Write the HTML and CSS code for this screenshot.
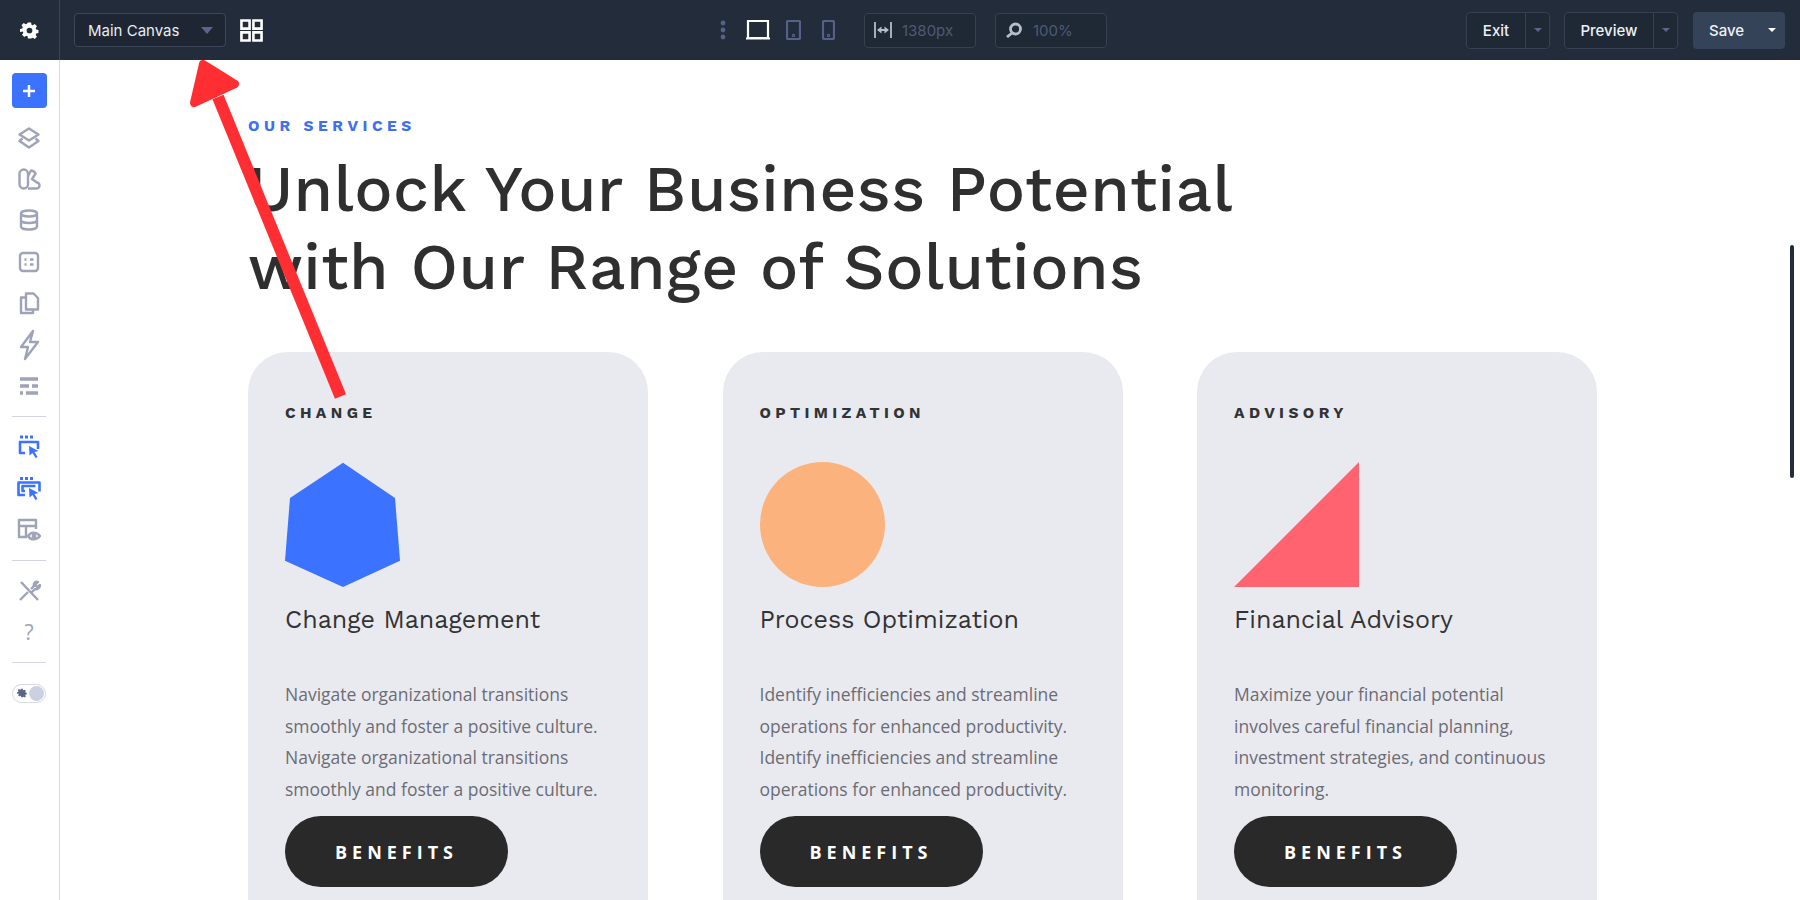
FILE: index.html
```html
<!DOCTYPE html>
<html lang="en">
<head>
<meta charset="utf-8">
<title>Our Services</title>
<link rel="stylesheet" href="styles.css">
</head>
<body>
<div class="app">
  <header class="topbar">
    <div class="brand">
      <svg class="gear" viewBox="0 0 24 24"><path d="M10 2h4l.5 2.800 1.700.7 2.400-1.600 2.800 2.800-1.600 2.400.7 1.700 2.800.5v4l-2.800.5-.7 1.700 1.600 2.400-2.800 2.800-2.400-1.600-1.700.7L14 22h-4l-.5-2.800-1.700-.7-2.400 1.600-2.800-2.800 1.600-2.400-.7-1.700L0 14v-4l2.800-.5.7-1.700-1.600-2.400 2.800-2.800 2.400 1.600 1.700-.7z"/><circle class="gear-hole" cx="12" cy="12" r="3.600"/></svg>
    </div>
    <div class="left-tools">
      <div class="select"><span>Main Canvas</span><i class="caret"></i></div>
      <svg class="grid-icon" viewBox="0 0 24 24"><path d="M1.500 1.500h8.500v8.500H1.500zM14 1.500h8.500v8.500H14zM1.500 14h8.500v8.500H1.500zM14 14h8.500v8.500H14z"/></svg>
    </div>
    <div class="center-tools">
      <svg class="dots" viewBox="0 0 6 20"><circle cx="3" cy="3" r="2.400"/><circle cx="3" cy="10" r="2.400"/><circle cx="3" cy="17" r="2.400"/></svg>
      <svg class="device desktop" viewBox="0 0 24 20"><path d="M2 1h20v17H2zM0 18.500h24"/></svg>
      <svg class="device tablet" viewBox="0 0 15 20"><rect x="1" y="1" width="13" height="18" rx="1"/><circle cx="7.500" cy="15.500" r=".6"/></svg>
      <svg class="device phone" viewBox="0 0 13 20"><rect x="1" y="1" width="11" height="18" rx="1.500"/><circle cx="6.500" cy="15.500" r=".6"/></svg>
      <div class="field first">
        <svg class="field-icon" viewBox="0 0 18 16"><path d="M1 0v16M17 0v16M4 8h10"/><path class="solid" d="M3 8l4.500-3.500v7zM15 8l-4.500-3.500v7z"/></svg>
        <span>1380px</span>
      </div>
      <div class="field">
        <svg class="field-icon zoom" viewBox="0 0 18 16"><circle cx="10.500" cy="7" r="5"/><path d="M7 11l-5 4"/></svg>
        <span>100%</span>
      </div>
    </div>
    <div class="right-tools">
      <div class="split exit"><span class="label">Exit</span><span class="arrow-part"><i class="caret small"></i></span></div>
      <div class="split preview"><span class="label">Preview</span><span class="arrow-part"><i class="caret small"></i></span></div>
      <div class="save"><span>Save</span><i class="caret small white"></i></div>
    </div>
  </header>
  <div class="body-row">
    <aside class="sidebar">
      <div class="add"><svg viewBox="0 0 14 14"><path d="M7 1v12M1 7h12"/></svg></div>
      <div class="item"><svg viewBox="0 0 24 24"><path d="M12 2.500l9.500 6-9.500 6-9.500-6z"/><path d="M5.500 12.500l-3 2.500 9.500 6.500 9.500-6.500-3-2.500"/></svg></div>
      <div class="item"><svg viewBox="0 0 24 24"><rect x="2.500" y="2.500" width="8.500" height="19" rx="4.200"/><path d="M11 9l3-5.500c2.500.5 4 1.700 4.500 3L14.500 13M11 21.500h8a3 3 0 0 0 1-6l-5-3.500"/></svg></div>
      <div class="item"><svg viewBox="0 0 24 24"><ellipse cx="12" cy="5.500" rx="8" ry="3"/><path d="M4 5.500v13c0 1.700 3.600 3 8 3s8-1.300 8-3v-13M4 12c0 1.700 3.600 3 8 3s8-1.300 8-3"/></svg></div>
      <div class="item"><svg viewBox="0 0 24 24"><rect x="3" y="3" width="18" height="18" rx="3"/><path d="M7.500 9.500h2M7.500 14.500h2M13 9.500h3.500M13 14.500h3.500"/></svg></div>
      <div class="item"><svg viewBox="0 0 24 24"><path d="M9 2.500h7.500l4.500 4.500v11.500H9z"/><path d="M9 6.500H4v15.500h12v-3.500"/></svg></div>
      <div class="item"><svg class="bolt" viewBox="0 0 24 32"><path d="M16 2L4 18h7l-3 12L21 13h-8z"/></svg></div>
      <div class="item"><svg class="lines" viewBox="0 0 24 24"><path d="M3 5h18M3 12h9M15 12h6M3 19h3M9 19h12"/></svg></div>
      <div class="rule first-rule"></div>
      <div class="item blue"><svg viewBox="0 0 24 24"><path d="M3 2h3M8 2h3M13 2h3" class="thick"/><path d="M8 18H3V7h18v7"/><path class="solid" d="M12 11l9.500 5-4 1 3 5-2 1-3-5-3 2.500z"/></svg></div>
      <div class="item blue"><svg viewBox="0 0 24 24"><path d="M3 1.500h3M8 1.500h3M13 1.500h3" class="thick"/><path d="M8 18H1.500V5.500h21v9"/><path d="M8 14H5.500V9h13"/><path class="solid" d="M12 11l9.500 5-4 1 3 5-2 1-3-5-3 2.500z"/></svg></div>
      <div class="item"><svg viewBox="0 0 24 24"><path d="M10 19H2V2h17v9M2 8h17M9 8v11"/><path d="M11 18c3-4.500 8-4.500 12 0-4 4.500-9 4.500-12 0z"/><circle cx="17" cy="18" r="1.200"/></svg></div>
      <div class="rule"></div>
      <div class="item"><svg viewBox="0 0 24 24"><path d="M4 3l17 18M3 21l8-8M14 10l3-3c-1-3 2-5 4-4l-3 3 2 2 3-2c0 3-3 5-5 4l-3 3"/></svg></div>
      <div class="item question">?</div>
      <div class="rule"></div>
      <div class="toggle"><svg viewBox="0 0 24 24"><path d="M10 2h4l.5 2.800 1.700.7 2.400-1.600 2.800 2.800-1.600 2.400.7 1.700 2.800.5v4l-2.800.5-.7 1.700 1.600 2.400-2.800 2.800-2.400-1.600-1.700.7L14 22h-4l-.5-2.800-1.700-.7-2.400 1.600-2.800-2.800 1.600-2.400-.7-1.700L0 14v-4l2.800-.5.7-1.700-1.600-2.400 2.800-2.800 2.400 1.600 1.700-.7z"/></svg><i class="knob"></i></div>
    </aside>
    <main class="canvas">
      <p class="eyebrow">OUR SERVICES</p>
      <h1>Unlock Your Business Potential<br>with Our Range of Solutions</h1>
      <section class="cards">
        <article class="card">
          <h3 class="tag">CHANGE</h3>
          <svg class="shape" viewBox="0 0 115 125"><polygon class="hex" points="58,0.700 110,36 115,98.700 58,125 0,98.700 5,36"/></svg>
          <h2>Change Management</h2>
          <p class="copy">Navigate organizational transitions smoothly and foster a positive culture. Navigate organizational transitions smoothly and foster a positive culture.</p>
          <a class="btn">BENEFITS</a>
        </article>
        <article class="card">
          <h3 class="tag">OPTIMIZATION</h3>
          <svg class="shape" viewBox="0 0 125 125"><circle class="circ" cx="62.500" cy="62.500" r="62.500"/></svg>
          <h2>Process Optimization</h2>
          <p class="copy">Identify inefficiencies and streamline operations for enhanced productivity. Identify inefficiencies and streamline operations for enhanced productivity.</p>
          <a class="btn">BENEFITS</a>
        </article>
        <article class="card">
          <h3 class="tag">ADVISORY</h3>
          <svg class="shape" viewBox="0 0 125 125"><polygon class="tri" points="125,0 125,125 0,125"/></svg>
          <h2>Financial Advisory</h2>
          <p class="copy">Maximize your financial potential involves careful financial planning, investment strategies, and continuous monitoring.</p>
          <a class="btn">BENEFITS</a>
        </article>
      </section>
    </main>
  </div>
  <i class="scrollbar"></i>
  <svg class="annotation" viewBox="0 0 400 420"><path class="shaft" d="M218 97L340.500 396.500"/><path class="head" d="M203 64L235 84L194 103z"/></svg>
</div>
</body>
</html>
```
FILE: styles.css
```css
* { box-sizing: border-box; }
html, body { margin: 0; height: 100%; }
body { background: #fff; font-family: Inter, "Liberation Sans", sans-serif; color: #2d2d2d; overflow: hidden; }
.app { position: relative; width: 100%; height: 900px; overflow: hidden; display: flex; flex-direction: column; }

.topbar { height: 60px; flex: none; background: #222c3a; display: flex; align-items: center; color: #e8ecf2; font-size: 15px; }
.brand { width: 60px; height: 60px; flex: none; display: flex; align-items: center; justify-content: center; border-right: 1px solid #3a4455; }
.gear { width: 19px; height: 19px; fill: #fff; }
.gear-hole { fill: #222c3a; }
.left-tools { display: flex; align-items: center; margin-left: 14px; gap: 14px; width: 190px; flex: none; }
.select { width: 152px; height: 34px; flex: none; border: 1px solid #3b4759; border-radius: 4px; background: #1e2633; display: flex; align-items: center; justify-content: space-between; padding: 0 12px 0 13px; }
.select span { font-size: 15px; }
.caret { display: block; width: 0; height: 0; border-left: 6px solid transparent; border-right: 6px solid transparent; border-top: 7px solid #5a6589; }
.caret.small { border-left-width: 4px; border-right-width: 4px; border-top-width: 4px; }
.caret.white { border-top-color: #fff; }
.grid-icon { width: 23px; height: 23px; fill: none; stroke: #fff; stroke-width: 2.700; flex: none; }

.center-tools { display: flex; align-items: center; margin-left: 456px; flex: none; }
.dots { width: 6px; height: 20px; fill: #56618a; margin-right: 20px; }
.device { height: 20px; fill: none; stroke: #56618a; stroke-width: 2.200; flex: none; }
.device.desktop { width: 24px; stroke: #fff; margin-right: 16px; }
.device.tablet { width: 15px; margin-right: 21px; }
.device.phone { width: 13px; margin-right: 29px; }
.field { width: 112px; height: 35px; border: 1px solid #354052; border-radius: 4px; background: #1f2835; display: flex; align-items: center; gap: 10px; padding-left: 9px; color: #4e5a75; font-size: 15px; margin-left: 19px; }
.field.first { margin-left: 0; }
.field-icon { width: 18px; height: 16px; fill: none; stroke: #b4bccd; stroke-width: 1.800; flex: none; }
.field-icon.zoom { stroke-width: 2.800; }
.solid { fill: #b4bccd; stroke: none; }

.right-tools { margin-left: auto; margin-right: 15px; display: flex; align-items: center; gap: 14px; }
.split { height: 37px; border: 1px solid #354052; border-radius: 4px; background: #1f2835; display: flex; font-weight: 500; font-size: 15px; color: #eef1f5; }
.split.exit { width: 84px; }
.split.preview { width: 114px; }
.label { flex: 1; display: flex; align-items: center; justify-content: center; }
.arrow-part { width: 24px; border-left: 1px solid #354052; display: flex; align-items: center; justify-content: center; }
.save { width: 92px; height: 37px; margin-left: 1px; background: #344358; border-radius: 4px; display: flex; align-items: center; justify-content: space-between; padding: 0 9px 0 16px; font-weight: 500; font-size: 15px; color: #eef1f5; }

.body-row { flex: 1; display: flex; min-height: 0; }
.sidebar { width: 60px; flex: none; border-right: 1px solid #d8dbe6; background: #fff; display: flex; flex-direction: column; align-items: center; padding: 13px 1px 0 0; }
.add { width: 35px; height: 35px; background: #3b72ff; border-radius: 4px; display: flex; align-items: center; justify-content: center; margin-bottom: 9px; flex: none; }
.add svg { width: 14px; height: 14px; fill: none; stroke: #fff; stroke-width: 2.500; }
.item { height: 41.400px; width: 100%; display: flex; align-items: center; justify-content: center; flex: none; }
.item svg { width: 24px; height: 24px; fill: none; stroke: #9ea3b8; stroke-width: 2.400; stroke-linejoin: round; }
.item .bolt { width: 24px; height: 32px; }
.item .lines { stroke-width: 3.600; }
.item.blue svg { stroke: #3b72ff; stroke-width: 2.600; }
.item.blue .solid { fill: #3b72ff; stroke: none; }
.item.blue .thick { stroke-width: 3.200; }
.question { font-size: 21px; font-weight: 500; color: #9ea3b8; font-family: "Open Sans", sans-serif; }
.rule { width: 34px; height: 1px; background: #d4d6df; margin: 9px 0 9px; flex: none; }
.rule.first-rule { margin-bottom: 10px; }
.toggle { width: 34px; height: 19px; border: 1px solid #d7d9e3; border-radius: 10px; display: flex; align-items: center; justify-content: space-between; padding: 0 1px 0 4px; margin-top: 12px; flex: none; }
.toggle svg { width: 10px; height: 10px; fill: #5a6589; }
.knob { width: 15px; height: 15px; border-radius: 50%; background: #ccd1e2; }

.canvas { flex: 1; padding: 57px 0 0 188px; min-width: 0; }
.eyebrow { margin: 0; font-family: "Work Sans", Inter, sans-serif; font-weight: 700; font-size: 15.500px; line-height: 18px; letter-spacing: 4.500px; color: #3f6ff0; }
h1 { margin: 15px 0 0; font-family: "Work Sans", Inter, sans-serif; font-weight: 500; font-size: 64px; line-height: 78px; letter-spacing: .480px; color: #2f2f2f; }
.cards { display: flex; gap: 74.500px; margin-top: 46px; }
.card { width: 400px; flex: none; height: 640px; background: #e9eaf0; border-radius: 40px; padding: 52px 37px 0; }
.tag { margin: 0; font-family: "Work Sans", Inter, sans-serif; font-weight: 700; font-size: 15.500px; line-height: 18px; letter-spacing: 4.400px; color: #333; }
.shape { display: block; width: auto; height: 125px; margin-top: 40px; }
.hex { fill: #3b72ff; }
.circ { fill: #fbb27c; }
.tri { fill: #ff6370; }
h2 { margin: 17px 0 0; font-family: "Work Sans", Inter, sans-serif; font-weight: 450; font-size: 25px; line-height: 32px; letter-spacing: 0; color: #333; }
.copy { margin: 43px 0 0; font-family: "Open Sans", sans-serif; font-size: 17.500px; line-height: 31.600px; color: #6c6c74; height: 127px; }
.btn { display: flex; align-items: center; justify-content: center; width: 223px; height: 71px; margin-top: 10px; border-radius: 36px; background: #292929; color: #fff; font-family: "Open Sans", sans-serif; font-weight: 700; font-size: 18px; letter-spacing: 5px; }

.scrollbar { position: absolute; left: 1790px; top: 245px; width: 4px; height: 233px; border-radius: 2px; background: #222c3a; }
.annotation { position: absolute; left: 0; top: 0; width: 400px; height: 420px; pointer-events: none; }
.shaft { stroke: #ff2e33; stroke-width: 12; fill: none; }
.head { fill: #ff2e33; stroke: #ff2e33; stroke-width: 8; stroke-linejoin: round; }
```
